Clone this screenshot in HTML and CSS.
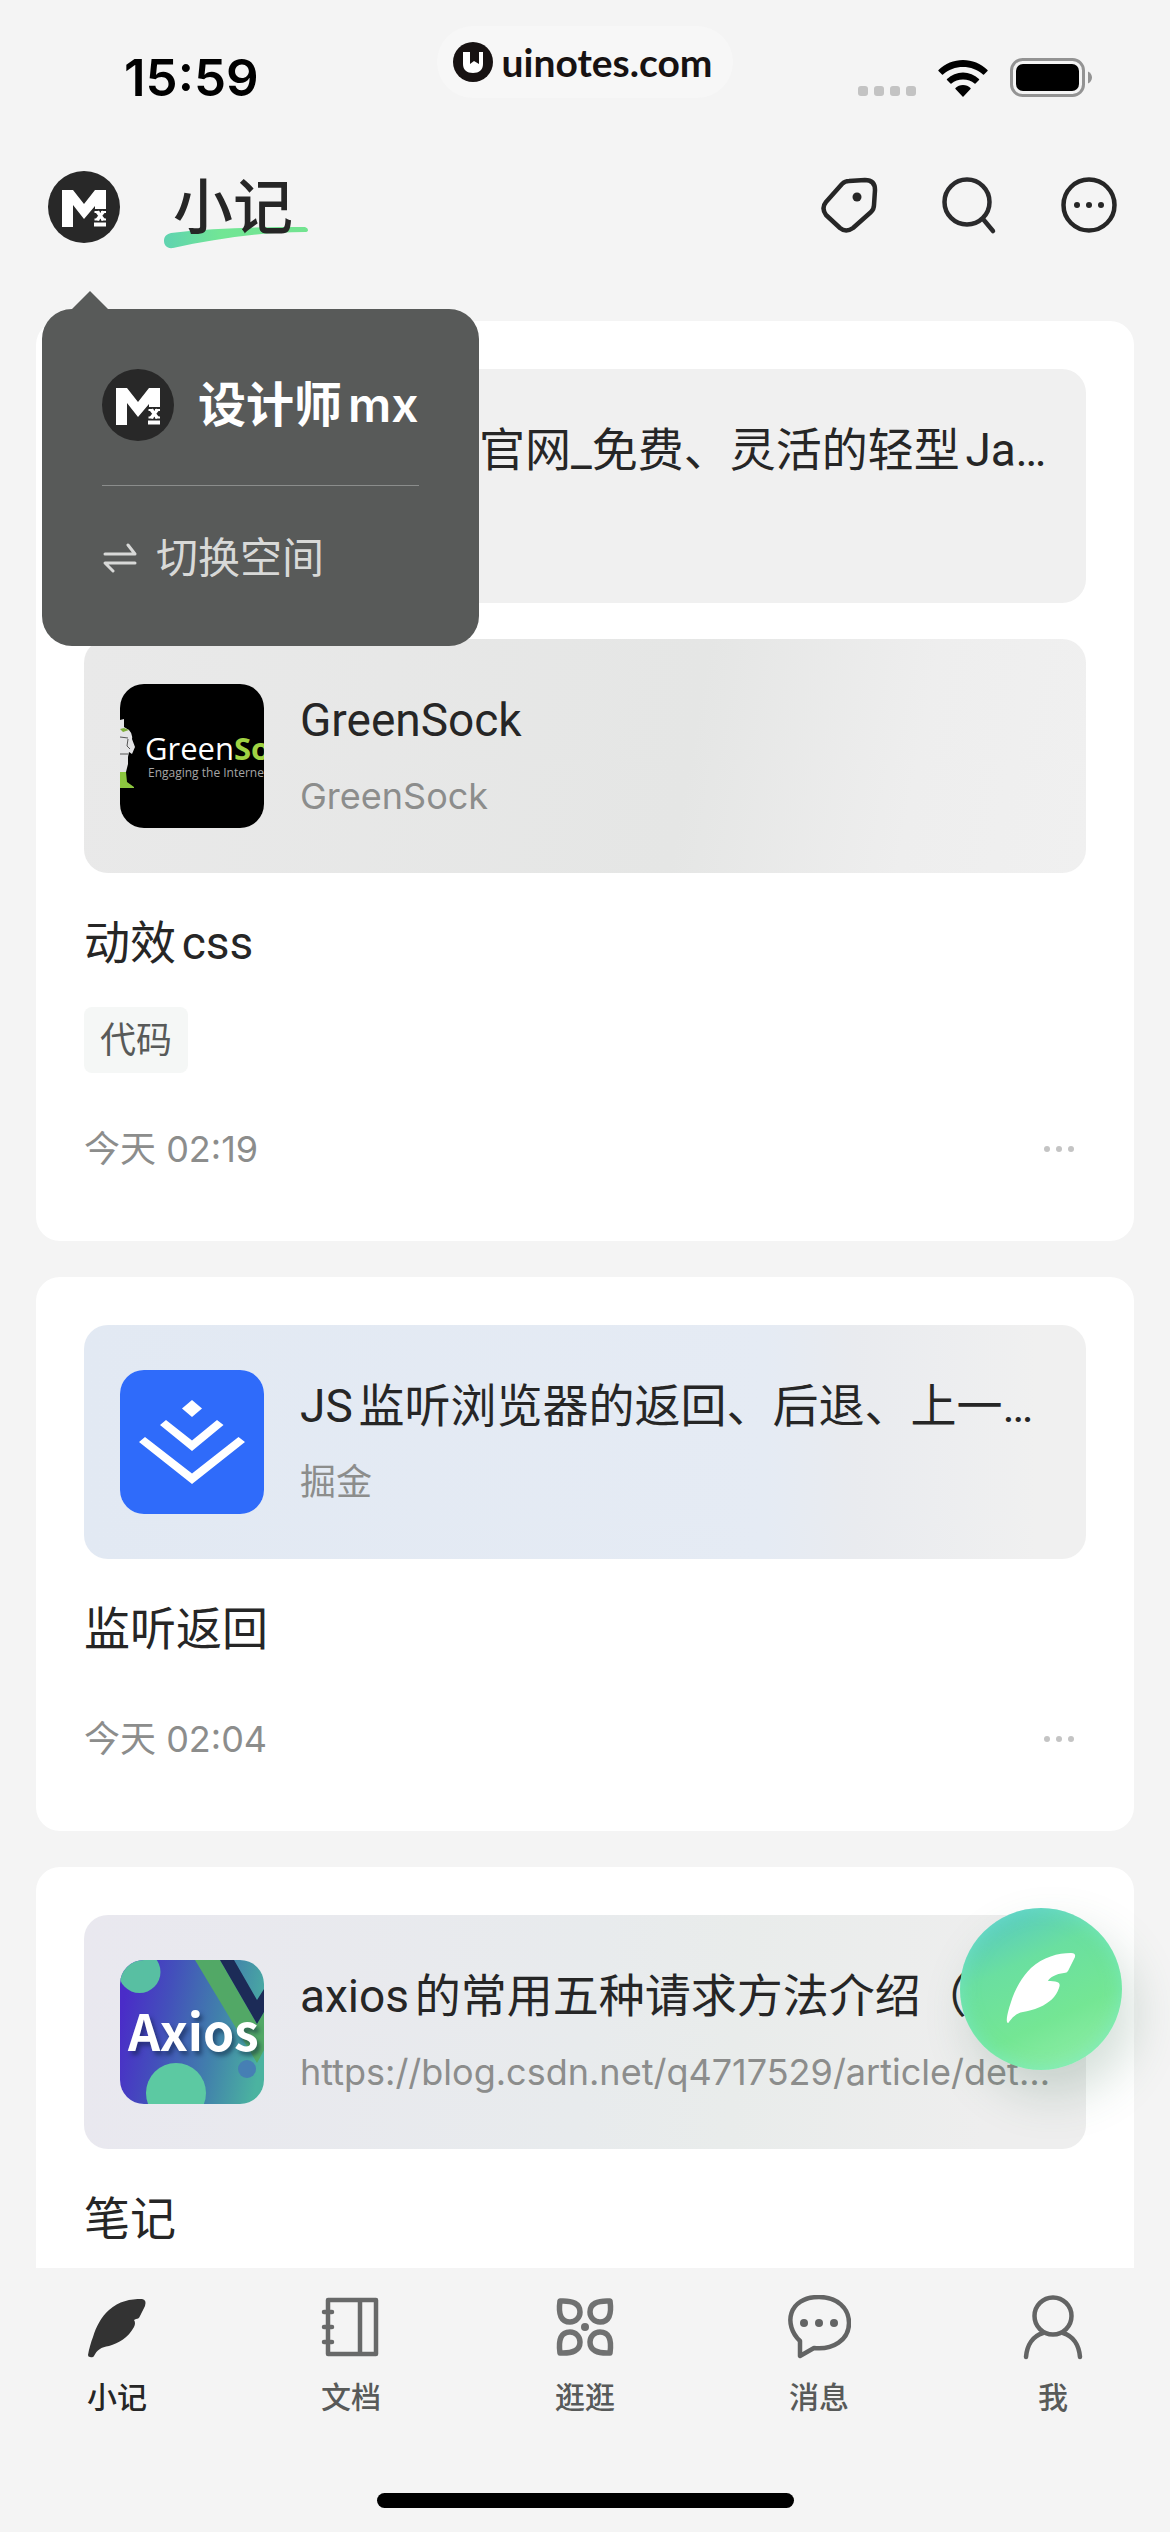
FILE: index.html
```html
<!DOCTYPE html>
<html lang="zh-CN">
<head>
    <meta charset="UTF-8">
    <meta name="viewport" content="width=device-width, initial-scale=1.0">
    <title>小记</title>
    <link rel="stylesheet" href="styles.css">
</head>
<body>
    <!-- 公用图形 -->
    <svg class="symbols" aria-hidden="true">
        <symbol id="logo-mx" viewBox="0 0 72 72">
            <circle cx="36" cy="36" r="36" fill="#282828"/>
            <path d="M14 19H25L36 33L47 19H58V38H47V35L36 48L25 34V56H14Z" fill="#fff"/>
            <path d="M46.500 41H51.500M53 41H58M46.500 48.500H51.500M53 48.500H58" stroke="#fff" stroke-width="2"/>
            <path d="M49 40.500L55.500 49M55.500 40.500L49 49" stroke="#fff" stroke-width="3.500"/>
            <path d="M46 51.500H58V55.500H46Z" fill="#fff"/>
        </symbol>
        <symbol id="dots" viewBox="0 0 30 8">
            <circle cx="3" cy="4" r="3"/><circle cx="15" cy="4" r="3"/><circle cx="27" cy="4" r="3"/>
        </symbol>
    </svg>

    <div class="app">
        <div class="status-bar">
            <div class="status-time">15:59</div>
            <div class="site-pill">
                <svg width="40" height="40" viewBox="0 0 40 40" aria-hidden="true">
                    <circle cx="20" cy="20" r="20" fill="#171212"/>
                    <path d="M10 10H17V22L21 19L26 22V10H30V22C30 28 26 31 20 31C14 31 10 28 10 22Z" fill="#fff"/>
                </svg>
                <span>uinotes.com</span>
            </div>
            <div class="status-icons">
                <svg width="58" height="38" viewBox="0 0 58 38" fill="#c3c3c3" aria-hidden="true">
                    <rect x="0" y="27" width="10" height="10" rx="3"/>
                    <rect x="16" y="27" width="10" height="10" rx="3"/>
                    <rect x="32" y="27" width="10" height="10" rx="3"/>
                    <rect x="48" y="27" width="10" height="10" rx="3"/>
                </svg>
                <svg width="50" height="38" viewBox="0 0 50 38" aria-hidden="true">
                    <path d="M25 1C34 1 43 4.500 49.500 11Q50 11.500 49.500 12L46 15.500Q45.500 16 45 15.500C39.500 10.500 32.500 8 25 8S10.500 10.500 5 15.500Q4.500 16 4 15.500L.5 12Q0 11.500 .5 11C7 4.500 16 1 25 1Z"/>
                    <path d="M25 13.500C31 13.500 36.500 15.700 41 20Q41.500 20.500 41 21L37.500 24.500Q37 25 36.500 24.500C33.500 22 29.500 20.500 25 20.500S16.500 22 13.500 24.500Q13 25 12.500 24.500L9 21Q8.500 20.500 9 20C13.500 15.700 19 13.500 25 13.500Z"/>
                    <path d="M25 26C28 26 30.500 27 32.500 29Q33 29.500 32.500 30L25.500 37.500Q25 38 24.500 37.500L17.500 30Q17 29.500 17.500 29C19.500 27 22 26 25 26Z"/>
                </svg>
                <svg width="82" height="40" viewBox="0 0 82 40" aria-hidden="true">
                    <rect x="1.500" y="1.500" width="72" height="36" rx="11" fill="none" stroke="#939393" stroke-width="3"/>
                    <rect x="6" y="6" width="63" height="27" rx="7"/>
                    <path d="M78 13.500C80.500 14.500 82 17 82 19.500S80.500 24.500 78 25.500Z" fill="#939393"/>
                </svg>
            </div>
        </div>

        <header class="header">
            <div class="account">
                <button class="avatar-btn" aria-label="切换账号">
                    <svg width="72" height="72"><use href="#logo-mx"/></svg>
                </button>
                <div class="popover">
                    <div class="popover-user">
                        <svg width="72" height="72" aria-hidden="true"><use href="#logo-mx"/></svg>
                        <span>设计师mx</span>
                    </div>
                    <button class="popover-switch">
                        <svg width="36" height="30" viewBox="0 0 36 30" fill="none" stroke="currentColor" stroke-width="3" stroke-linecap="round" stroke-linejoin="round" aria-hidden="true">
                            <path d="M3 11H33L26 2M33 20H3L11 28"/>
                        </svg>
                        <span>切换空间</span>
                    </button>
                </div>
            </div>
            <h1 class="title">
                <svg class="title-stroke" width="144" height="22" viewBox="0 0 144 22" aria-hidden="true">
                    <defs>
                        <linearGradient id="stroke-fill" x1="0" x2="1">
                            <stop offset="0" stop-color="#5fd3b0"/>
                            <stop offset=".4" stop-color="#72e695"/>
                            <stop offset="1" stop-color="#72e390"/>
                        </linearGradient>
                    </defs>
                    <path d="M7 6C50 1 95 0 141 0Q144 1 144 3Q144 5 141 5C95 5 50 12 9 21C3 22 0 18 0 14C0 9 3 7 7 6Z" fill="url(#stroke-fill)"/>
                </svg>
                <span>小记</span>
            </h1>
            <div class="header-actions">
                <button aria-label="标签">
                    <svg width="60" height="60" viewBox="-2 -2 60 60" fill="none" stroke="#262626" stroke-width="4.500" stroke-linejoin="round">
                        <path d="M21 7Q24 4 28 4L44 3Q54 3 54 13L53 28Q53 32 50 35L32 51Q25 56 19 51L5 38Q0 31 5 25Z"/>
                        <circle cx="36" cy="20" r="4.500" fill="#262626" stroke="none"/>
                    </svg>
                </button>
                <button aria-label="搜索">
                    <svg width="60" height="60" viewBox="0 0 60 60" fill="none" stroke="#2a2a2c" stroke-width="4.500" stroke-linecap="round">
                        <circle cx="28" cy="27" r="22.500"/>
                        <path d="M44 44L54 56"/>
                    </svg>
                </button>
                <button aria-label="更多">
                    <svg width="60" height="60" viewBox="0 0 60 60" fill="#262626">
                        <circle cx="30" cy="30" r="25.500" fill="none" stroke="#262626" stroke-width="4.500"/>
                        <circle cx="18" cy="30" r="3"/><circle cx="30" cy="30" r="3"/><circle cx="42" cy="30" r="3"/>
                    </svg>
                </button>
            </div>
        </header>

        <main class="feed">
            <article class="card">
                <div class="links">
                    <a class="link" href="#">
                        <div class="thumb"></div>
                        <div class="link-text">
                            <div class="link-title">anime.js官网_免费、灵活的轻型JavaScript动画库</div>
                            <div class="link-sub">animejs</div>
                        </div>
                    </a>
                    <a class="link link-gray" href="#">
                        <svg class="thumb" viewBox="0 0 144 144" aria-hidden="true">
                            <rect width="144" height="144"/>
                            <path d="M0 36L4 35L4 43L9 46Q13 50 12 55L15 63L12 70L9 68L8 73V80L6 88H0Z" fill="#e4e4e6"/>
                            <path d="M0 53L8 54M8 55L7 62L10 65M0 70H8" stroke="#555" stroke-width="1" fill="none"/>
                            <path d="M0 45L4 44L9 46L3 48Z" fill="#7fae3a"/>
                            <path d="M0 88H6L7 98L14 103V104H0Z" fill="#8cc63f"/>
                            <text class="gs-name" x="25" y="76" fill="#fff">Green<tspan class="gs-bold" fill="#a0d343">Sock</tspan></text>
                            <text class="gs-slogan" x="28" y="93" fill="#a5a5a5">Engaging the Internet</text>
                        </svg>
                        <div class="link-text">
                            <div class="link-title">GreenSock</div>
                            <div class="link-sub">GreenSock</div>
                        </div>
                    </a>
                </div>
                <p class="note">动效css</p>
                <span class="tag">代码</span>
                <div class="card-foot">
                    <time>今天 02:19</time>
                    <button class="more" aria-label="更多操作"><svg width="30" height="8"><use href="#dots"/></svg></button>
                </div>
            </article>

            <article class="card">
                <div class="links">
                    <a class="link link-blue" href="#">
                        <svg class="thumb" viewBox="0 0 144 144" aria-hidden="true">
                            <rect width="144" height="144" fill="#2f6bfa"/>
                            <g fill="#fff">
                                <path d="M72 30L82 38.500L72 47L62 38.500Z"/>
                                <path d="M46 50L72 70.500L97 50L103.500 55L72 81L40 55Z"/>
                                <path d="M25 67L72 103.500L118.500 67L125 72L72 114L19 72Z"/>
                            </g>
                        </svg>
                        <div class="link-text">
                            <div class="link-title">JS监听浏览器的返回、后退、上一页按钮事件</div>
                            <div class="link-sub">掘金</div>
                        </div>
                    </a>
                </div>
                <p class="note">监听返回</p>
                <div class="card-foot">
                    <time>今天 02:04</time>
                    <button class="more" aria-label="更多操作"><svg width="30" height="8"><use href="#dots"/></svg></button>
                </div>
            </article>

            <article class="card">
                <div class="links">
                    <a class="link link-violet" href="#">
                        <svg class="thumb" viewBox="0 0 144 144" aria-hidden="true">
                            <defs>
                                <linearGradient id="axios-bg" x1="0" y1=".4" x2="1" y2=".6">
                                    <stop offset="0" stop-color="#4a2cc8"/>
                                    <stop offset=".3" stop-color="#4350bb"/>
                                    <stop offset=".65" stop-color="#417fac"/>
                                    <stop offset="1" stop-color="#4bb3a0"/>
                                </linearGradient>
                            </defs>
                            <rect width="144" height="144" fill="url(#axios-bg)"/>
                            <path d="M75 0H100L137 64L144 52V90L137 103Z" fill="#52a866"/>
                            <path d="M100 0H114L137 40L144 29V52L137 64Z" fill="#1c2b57"/>
                            <circle cx="19.500" cy="12" r="21" fill="#58bfa2"/>
                            <circle cx="56" cy="133" r="30" fill="#5cc9a2"/>
                            <circle cx="127" cy="109" r="9" fill="#467fb4"/>
                            <text class="axios-name" x="8" y="91" fill="#fff">Axios</text>
                        </svg>
                        <div class="link-text">
                            <div class="link-title">axios的常用五种请求方法介绍（基础用法）</div>
                            <div class="link-sub">https://blog.csdn.net/q4717529/article/details/104290526</div>
                        </div>
                    </a>
                </div>
                <p class="note">笔记</p>
                <div class="card-foot">
                    <time>今天 01:47</time>
                    <button class="more" aria-label="更多操作"><svg width="30" height="8"><use href="#dots"/></svg></button>
                </div>
            </article>
        </main>

        <button class="fab" aria-label="写小记">
            <svg width="70" height="72" viewBox="0 0 70 72" fill="#fff">
                <path d="M1 69C0 65 3 55 5 49C9 36 16 24 25 15C37 4 52 0 65 0Q70 0 69 4L62 18Q61 20 58 20C50 21 44 24 42 28C45 28 49 28 51 29Q55 30 53 35C50 44 43 50 34 54C27 57 22 58 17 59C10 60 6 65 3 69Q2 71 1 69Z"/>
            </svg>
        </button>

        <nav class="tabbar">
            <div class="tabs">
                <a class="tab active" href="#">
                    <svg width="64" height="66" viewBox="-3 -4 64 66" fill="#333">
                        <path d="M0 56C1 50 3 43 5 38C8 28 13 18 21 11C31 2 42 0 54 0Q59 1 57 7L52 17Q51 20 48 20L46 21Q48 24 46 28C40 39 31 44 21 47C13 48 9 51 6 57Q5 59 2 58Q0 58 0 56Z"/>
                    </svg>
                    <span>小记</span>
                </a>
                <a class="tab" href="#">
                    <svg width="64" height="66" viewBox="-3 -5 64 66" fill="none" stroke="#686969" stroke-width="4.500" stroke-linecap="round" stroke-linejoin="round">
                        <path d="M6 0H54V54H6ZM38 0V54M2 12H10M2 27H10M2 42H10"/>
                    </svg>
                    <span>文档</span>
                </a>
                <a class="tab" href="#">
                    <svg width="64" height="66" viewBox="-3 -3 64 66" fill="none" stroke="#707171" stroke-width="5.500" stroke-linejoin="round">
                        <g id="petal"><path d="M4 3Q24 2 24 14A10 10 0 0 1 14 24Q1 24 4 3Z"/></g>
                        <use href="#petal" transform="translate(58 0) scale(-1 1)"/>
                        <use href="#petal" transform="translate(0 58) scale(1 -1)"/>
                        <use href="#petal" transform="translate(58 58) scale(-1 -1)"/>
                        <circle cx="29" cy="29" r="4" fill="#707171" stroke="none"/>
                    </svg>
                    <span>逛逛</span>
                </a>
                <a class="tab" href="#">
                    <svg width="64" height="66" viewBox="0 0 64 66" fill="none" stroke="#636464" stroke-width="4.500" stroke-linecap="round" stroke-linejoin="round">
                        <path d="M13 46C-4 30 1 2 32 2C50 2 62 13 62 28C62 45 46 55 27 53L13 61Z"/>
                        <g fill="#636464" stroke="none"><circle cx="17" cy="28" r="4"/><circle cx="32" cy="28" r="4"/><circle cx="47" cy="28" r="4"/></g>
                    </svg>
                    <span>消息</span>
                </a>
                <a class="tab" href="#">
                    <svg width="64" height="66" viewBox="-3 0 64 66" fill="none" stroke="#636464" stroke-width="4.500" stroke-linecap="round">
                        <circle cx="29" cy="21" r="18.500"/>
                        <path d="M2 62C3 50 9 41 19 38M56 62C55 50 49 41 39 38"/>
                    </svg>
                    <span>我</span>
                </a>
            </div>
            <div class="home-indicator"></div>
        </nav>
    </div>
</body>
</html>
```
FILE: styles.css
```css
* {
    box-sizing: border-box;
}

body {
    margin: 0;
    background-color: #f4f4f4;
    color: #262626;
    font-family: Inter, "Noto Sans CJK SC", sans-serif;
}

h1,
p {
    margin: 0;
    font-weight: 400;
}

button {
    padding: 0;
    border: none;
    background: none;
    color: inherit;
    font: inherit;
    cursor: pointer;
}

a {
    color: inherit;
    text-decoration: none;
}

svg {
    display: block;
    flex-shrink: 0;
}

.symbols {
    position: absolute;
    width: 0;
    height: 0;
}

.app {
    display: flex;
    flex-direction: column;
    height: 100vh;
    overflow: hidden;
}

/* 状态栏 */
.status-bar {
    display: grid;
    grid-template-columns: 1fr auto 1fr;
    align-items: center;
    flex-shrink: 0;
    height: 124px;
    padding: 0 78px;
}

.status-time {
    margin-top: 32px;
    padding-left: 46px;
    color: #000;
    font-size: 51px;
    font-weight: 600;
    line-height: 60px;
}

.site-pill {
    display: flex;
    align-items: center;
    gap: 8px;
    height: 72px;
    padding: 0 20px 0 16px;
    border-radius: 36px;
    background-color: #f7f7f7;
    color: #171212;
    font-family: Lato, sans-serif;
    font-size: 39px;
    font-weight: 700;
}

.status-icons {
    display: flex;
    align-items: center;
    justify-content: flex-end;
    gap: 22px;
    margin-top: 32px;
}

/* 顶部导航 */
.header {
    display: flex;
    align-items: center;
    flex-shrink: 0;
    height: 149px;
    padding: 17px 51px 0 48px;
}

.account {
    position: relative;
    z-index: 2;
}

.avatar-btn {
    display: block;
}

.title {
    position: relative;
    margin-left: 53px;
    font-size: 60px;
    font-weight: 500;
    line-height: 80px;
}

.title span {
    position: relative;
}

.title-stroke {
    position: absolute;
    left: -9px;
    bottom: -2px;
}

.header-actions {
    display: flex;
    gap: 60px;
    margin-bottom: 4px;
    margin-left: auto;
}

/* 账号弹层 */
.popover {
    position: absolute;
    top: 138px;
    left: -6px;
    padding: 60px;
    border-radius: 30px;
    background-color: #585a59;
    white-space: nowrap;
}

.popover::before {
    content: "";
    position: absolute;
    top: -18px;
    left: 30px;
    border: 18px solid transparent;
    border-top: none;
    border-bottom-color: #585a59;
}

.popover-user {
    display: flex;
    align-items: center;
    gap: 24px;
    padding-bottom: 44px;
    border-bottom: 1px solid #8b8d8c;
    color: #fff;
    font-size: 48px;
    font-weight: 600;
    line-height: 72px;
    text-autospace: normal;
}

.popover-switch {
    display: flex;
    align-items: center;
    gap: 18px;
    padding-top: 44px;
    color: #d8d9d8;
    font-size: 42px;
    line-height: 56px;
}

/* 小记列表 */
.feed {
    display: flex;
    flex: 1;
    flex-direction: column;
    gap: 36px;
    min-height: 0;
    padding: 48px 36px 0;
    overflow-y: auto;
    scrollbar-width: none;
}

.card {
    flex-shrink: 0;
    padding: 48px 48px 64px;
    border-radius: 24px;
    background-color: #fff;
}

.links {
    display: flex;
    flex-direction: column;
    gap: 36px;
}

.link {
    display: flex;
    align-items: center;
    gap: 36px;
    height: 234px;
    padding: 0 30px 0 36px;
    border-radius: 24px;
    background-color: #f0f0f0;
}

.link-gray {
    background-image: linear-gradient(100deg, #e9e9e9, #e5e6e5 60%, #eeeeee 82%, #f0f0f0);
}

.link-blue {
    background-image: linear-gradient(90deg, #e2e9f3, #e5ebf4 68%, #e9ebef 77%, #f0f0f0 95%);
}

.link-violet {
    background-image: linear-gradient(95deg, #e9e8ef, #e8ebed 50%, #e9eceb 65%, #eeeeee 90%);
}

.thumb {
    flex-shrink: 0;
    width: 144px;
    height: 144px;
    border-radius: 24px;
    background-color: #fff;
    overflow: hidden;
}

.gs-name {
    font-family: "Open Sans", sans-serif;
    font-size: 31px;
}

.gs-bold {
    font-weight: 700;
}

.gs-slogan {
    font-family: "Open Sans", sans-serif;
    font-size: 12px;
}

.axios-name {
    font-family: "Noto Sans CJK SC", sans-serif;
    font-size: 50px;
    font-weight: 700;
    text-shadow: 3px 4px 4px rgba(10, 30, 60, 0.5);
}

.link-text {
    flex: 1;
    min-width: 0;
}

.link-title,
.link-sub {
    overflow: hidden;
    text-overflow: ellipsis;
    white-space: nowrap;
    text-autospace: normal;
}

.link-title,
.note {
    font-family: Roboto, "Noto Sans CJK SC", sans-serif;
    font-size: 46px;
}

.link-title {
    line-height: 80px;
}

.link-sub {
    color: #8c8d8c;
    font-size: 36px;
    line-height: 72px;
}

.note {
    padding-top: 36px;
    line-height: 68px;
    text-autospace: normal;
}

.tag {
    display: block;
    width: fit-content;
    margin-top: 30px;
    padding: 0 16px;
    border-radius: 8px;
    background-color: #f5f7f6;
    color: #585a59;
    font-size: 36px;
    line-height: 66px;
}

.card-foot {
    display: flex;
    align-items: center;
    justify-content: space-between;
    margin-top: 48px;
    padding-right: 12px;
    color: #8c8d8c;
    font-size: 36px;
    line-height: 56px;
}

.more {
    fill: #c4c4c4;
}

/* 悬浮按钮 */
.fab {
    position: fixed;
    right: 48px;
    bottom: 462px;
    display: flex;
    align-items: center;
    justify-content: center;
    width: 162px;
    height: 162px;
    border-radius: 50%;
    background-image: linear-gradient(155deg, #57c8c4 8%, #6adfa0 35%, #74e694 65%, #8eeda6 90%);
    box-shadow: inset 0 0 18px rgba(120, 235, 210, 0.6), 12px 24px 48px rgba(60, 110, 80, 0.22);
}

/* 底部标签栏 */
.tabbar {
    flex-shrink: 0;
    height: 264px;
    background-color: #f4f4f4;
}

.tabs {
    display: flex;
    padding-top: 27px;
}

.tab {
    display: flex;
    flex: 1;
    flex-direction: column;
    align-items: center;
    gap: 16px;
    color: #585a59;
    font-size: 30px;
    font-weight: 500;
    line-height: 40px;
}

.tab.active {
    color: #262626;
}

.home-indicator {
    width: 417px;
    height: 15px;
    margin: 76px auto 0;
    border-radius: 8px;
    background-color: #000;
}
```
